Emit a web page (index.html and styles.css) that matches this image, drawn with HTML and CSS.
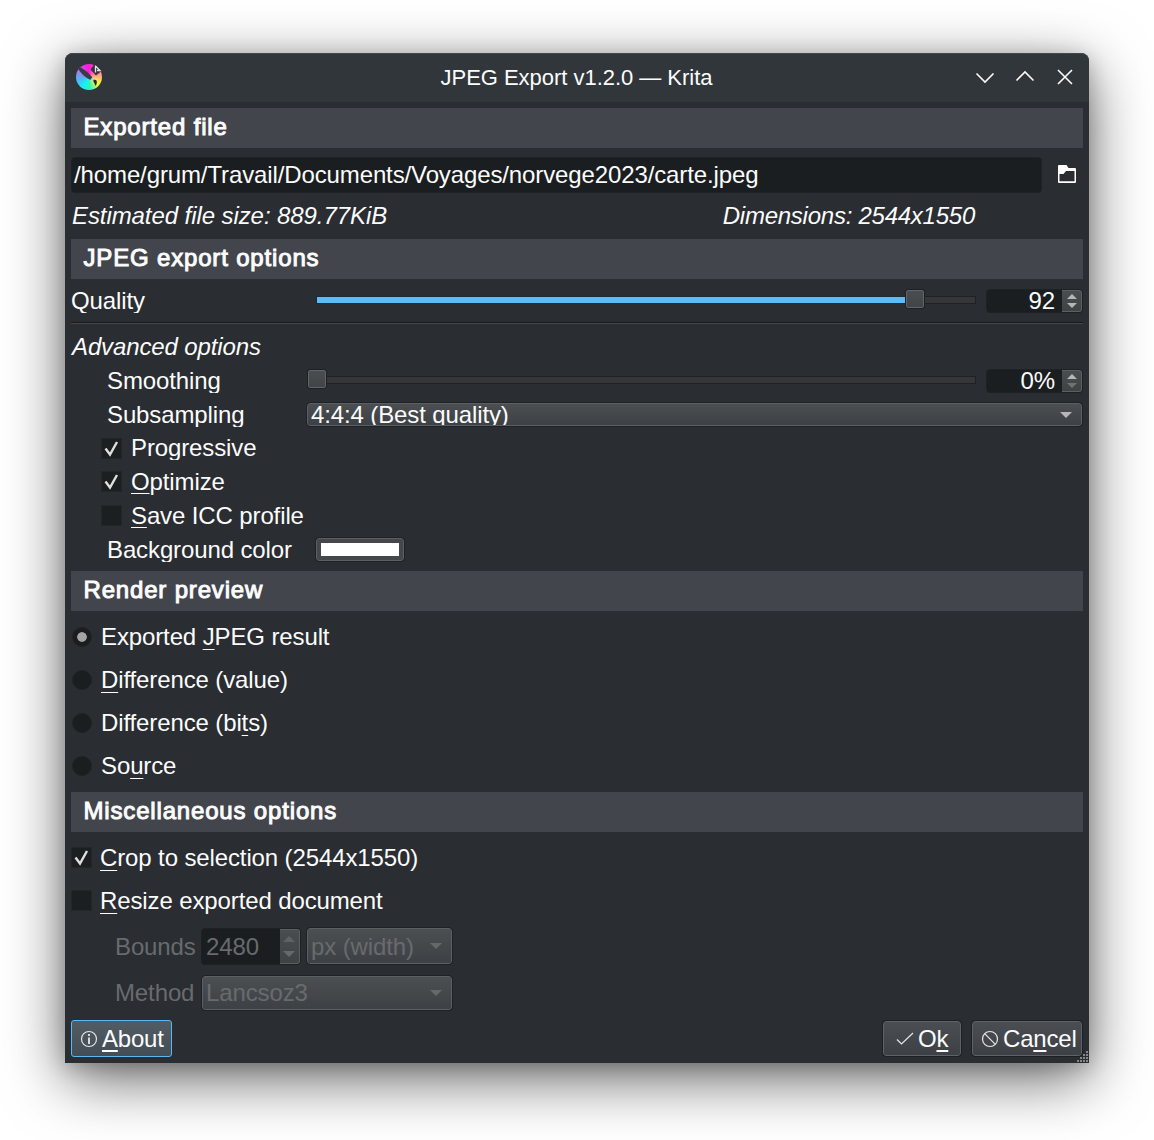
FILE: index.html
```html
<!DOCTYPE html>
<html lang="en">
<head>
<meta charset="utf-8">
<title>JPEG Export v1.2.0 — Krita</title>
<link rel="stylesheet" href="styles.css">
</head>
<body>
<main class="window">
  <header class="titlebar">
    <div class="logo">
      <svg width="30" height="30" viewBox="0 0 30 30">
        <path d="M3 5 7 5.500Q14 9.500 18.500 15.500L16.500 18Q8 14 3 5Z" fill="#3a3b43"/>
        <path d="M16.500 17.500l2.200-2.200 2.500 2-2 2.500z" fill="#b9cfd0"/>
        <path d="M19.500 18c3.500-1.500 4.500 2.500 2 6-.6-3-2.500-3.500-2-6z" fill="#26282b"/>
        <path d="M16.500 7.500l3.500-5 9 5.500-4 3-3 2.500z" fill="#35363d"/>
        <path d="M21.500 3.500v7M21.500 4l4.500 4.500h-3" fill="none" stroke="#e3e5e6" stroke-width="1.300"/>
      </svg>
    </div>
    <h1 class="title">JPEG Export v1.2.0 — Krita</h1>
    <div class="controls">
      <svg width="20" height="20" viewBox="0 0 20 20"><path d="M1.500 6.500 10 15 18.500 6.500"/></svg>
      <svg width="20" height="20" viewBox="0 0 20 20"><path d="M1.500 13.500 10 5 18.500 13.500"/></svg>
      <svg width="20" height="20" viewBox="0 0 20 20"><path d="M3 3 17 17M17 3 3 17"/></svg>
    </div>
  </header>

  <div class="content">
    <h2 class="section">Exported file</h2>
    <div class="file-row">
      <div class="path">/home/grum/Travail/Documents/Voyages/norvege2023/carte.jpeg</div>
      <svg class="folder" width="18" height="18" viewBox="0 0 18 18">
        <path fill="#fff" fill-rule="evenodd" d="M1 0h7.500l2 3H17a1 1 0 0 1 1 1v13a1 1 0 0 1-1 1H1a1 1 0 0 1-1-1V1a1 1 0 0 1 1-1zM1.500 9v7.300h15V6H8L5.500 9z"/>
      </svg>
    </div>
    <div class="info">
      <span>Estimated file size: 889.77KiB</span>
      <span class="dims">Dimensions: 2544x1550</span>
    </div>

    <h2 class="section">JPEG export options</h2>
    <div class="quality">
      <span class="label clip">Quality</span>
      <div class="slider inset"><div class="fill"></div><div class="handle"></div><div class="rest"></div></div>
      <div class="spin"><span class="value">92</span><span class="steps"><i class="up"></i><i class="down"></i></span></div>
    </div>
    <div class="divider"></div>
    <div class="advanced">Advanced options</div>
    <div class="row">
      <span class="label indent clip">Smoothing</span>
      <div class="slider"><div class="handle"></div><div class="rest"></div></div>
      <div class="spin"><span class="value">0%</span><span class="steps"><i class="up"></i><i class="down dim"></i></span></div>
    </div>
    <div class="row">
      <span class="label indent clip">Subsampling</span>
      <div class="combo wide"><span class="combo-text">4:4:4 (Best quality)</span><i class="down"></i></div>
    </div>
    <div class="row check-row first"><span class="box"><svg width="21" height="21" viewBox="0 0 21 21"><path d="M4.500 10.500 9 16.500 16 4"/></svg></span><span class="clip">Progressive</span></div>
    <div class="row check-row"><span class="box"><svg width="21" height="21" viewBox="0 0 21 21"><path d="M4.500 10.500 9 16.500 16 4"/></svg></span><span><u>O</u>ptimize</span></div>
    <div class="row check-row"><span class="box"></span><span><u>S</u>ave ICC profile</span></div>
    <div class="row">
      <span class="label indent clip">Background color</span>
      <div class="swatch"><div class="color"></div></div>
    </div>

    <h2 class="section after-form">Render preview</h2>
    <div class="group">
      <div class="option"><span class="radio on"></span><span>Exported <u>J</u>PEG result</span></div>
      <div class="option"><span class="radio"></span><span><u>D</u>ifference (value)</span></div>
      <div class="option"><span class="radio"></span><span>Difference (bi<u>t</u>s)</span></div>
      <div class="option"><span class="radio"></span><span>So<u>u</u>rce</span></div>
    </div>

    <h2 class="section">Miscellaneous options</h2>
    <div class="group misc">
      <div class="option"><span class="box"><svg width="21" height="21" viewBox="0 0 21 21"><path d="M4.500 10.500 9 16.500 16 4"/></svg></span><span><u>C</u>rop to selection (2544x1550)</span></div>
      <div class="option"><span class="box"></span><span><u>R</u>esize exported document</span></div>
    </div>
    <div class="disabled">
      <span class="field-label">Bounds</span>
      <div class="spin tall"><span class="value">2480</span><span class="steps"><i class="up"></i><i class="down"></i></span></div>
      <div class="combo unit"><span>px (width)</span><i class="down"></i></div>
    </div>
    <div class="disabled method">
      <span class="field-label">Method</span>
      <div class="combo kernel"><span>Lancsoz3</span><i class="down"></i></div>
    </div>

    <footer class="actions">
      <div class="button about">
        <svg width="18" height="18" viewBox="0 0 18 18"><circle cx="9" cy="9" r="7.500"/><path d="M9 7.500V14M9 4v2" stroke-width="1.800"/></svg>
        <span><u>A</u>bout</span>
      </div>
      <div class="button ok">
        <svg width="18" height="18" viewBox="0 0 18 18"><path d="M1 9.500 5.500 14 17 3"/></svg>
        <span>O<u>k</u></span>
      </div>
      <div class="button cancel">
        <svg width="18" height="18" viewBox="0 0 18 18"><circle cx="9" cy="9" r="7.500"/><path d="M3.700 3.700 14.300 14.300"/></svg>
        <span>Ca<u>n</u>cel</span>
      </div>
    </footer>
  </div>
  <svg class="grip" width="12" height="12" viewBox="0 0 12 12">
    <path fill="#858789" d="M9 0h2v2H9zM6 3h2v2H6zM9 3h2v2H9zM3 6h2v2H3zM6 6h2v2H6zM9 6h2v2H9zM0 9h2v2H0zM3 9h2v2H3zM6 9h2v2H6zM9 9h2v2H9z"/>
  </svg>
</main>
</body>
</html>
```

FILE: styles.css
```css
* { box-sizing: border-box; }

body {
  margin: 0;
  padding: 53px 65px 77px;
  height: 1140px;
  overflow: hidden;
  background: #fff;
  color: #fcfcfc;
  font: 24px/34px "Liberation Sans", Arial, sans-serif;
  letter-spacing: -.12px;
  white-space: nowrap;
}

.window {
  position: relative;
  width: 1024px;
  height: 1010px;
  background: #2a2d31;
  border-radius: 8px 8px 0 0;
  box-shadow: 0 16px 60px rgba(0, 0, 0, .6), 0 4px 20px rgba(0, 0, 0, .2);
}

.titlebar {
  display: grid;
  grid-template-columns: 1fr auto 1fr;
  align-items: center;
  height: 49px;
  padding: 0 14px 0 11px;
  background: #31363a;
  border-top: 1px solid #43484d;
  border-radius: 8px 8px 0 0;
}

.logo {
  width: 26px;
  height: 26px;
  margin-bottom: 2px;
  border-radius: 50%;
  background: conic-gradient(#fd1fd5, #ff8a94 70deg, #ffd75a 105deg, #e8ff3c 130deg, #35f0c0 175deg, #12f4f4 210deg, #4cb8f5 255deg, #9a83ee 295deg, #f61fe8 345deg, #fd1fd5);
}
.logo svg { display: block; margin: -2px; }

.title { margin: 0 0 0 2px; font-size: 22px; font-weight: 400; letter-spacing: -.03px; }

.controls { display: flex; justify-content: flex-end; gap: 20px; margin-bottom: 2px; }
.controls svg { fill: none; stroke: #fcfcfc; stroke-width: 1.6; }

.content { padding: 6px 6px 0; }

.section {
  margin: 0;
  height: 40px;
  padding-left: 12.5px;
  background: #42454c;
  font-size: 24px;
  line-height: 38px;
  font-weight: 400;
  letter-spacing: .83px;
  -webkit-text-stroke: 1px #fcfcfc;
}
.after-form { margin-top: 4px; }

.file-row {
  display: flex;
  align-items: center;
  justify-content: space-between;
  height: 36px;
  margin-top: 9px;
  padding-right: 7px;
}
.folder { margin-bottom: 2px; }
.path {
  width: 971px;
  height: 36px;
  padding-left: 2px;
  border: 1px solid #1f2225;
  border-radius: 4px;
  background: #1b1e20;
}

.info { display: flex; height: 46px; line-height: 46px; padding-left: 1px; font-style: italic; letter-spacing: -.08px; }
.dims { margin-left: auto; margin-right: 108px; letter-spacing: -.25px; }

.clip { height: 24px; line-height: 24px; overflow: hidden; }

.quality, .row { display: flex; align-items: center; }
.quality { height: 43px; }
.row { height: 34px; }
.label { width: 236px; }
.indent { padding-left: 36px; }

.divider { height: 2px; background: #44484c; border-top: 1px solid #18191b; }
.advanced { height: 40px; line-height: 46px; padding-left: 1px; font-style: italic; }

.slider { display: flex; align-items: center; width: 669px; height: 20px; margin-top: -2px; }
.slider.inset { padding-left: 9px; }
.fill { width: 589px; height: 8px; background: #5bbcf6; border: solid #1b2a34; border-width: 1px 0 1px 1px; }
.rest { flex: 1; height: 8px; background: #34373a; border: 1px solid #1f2123; border-left: 0; }
.handle {
  width: 20px;
  height: 20px;
  margin-top: -2px;
  border: 1px solid #1d2022;
  border-radius: 3px;
  background: linear-gradient(#4a4e52, #404447);
  box-shadow: inset 0 0 0 1px #62666a;
}

.spin {
  display: flex;
  width: 97px;
  height: 24px;
  margin-left: auto;
  border: 1px solid #1e2123;
  border-radius: 4px;
  background: #1b1e20;
  line-height: 22px;
}
.value { flex: 1; text-align: right; padding-right: 7px; }
.steps {
  display: flex;
  flex-direction: column;
  align-items: center;
  justify-content: center;
  gap: 4px;
  width: 20px;
  background: linear-gradient(#494d51, #3f4346);
  border: 1px solid #5c6063;
  border-left: 0;
  border-radius: 0 3px 3px 0;
}
.up { border: solid transparent; border-width: 0 5px 5px; border-bottom-color: #b4b6b7; }
.down { border: solid transparent; border-width: 5px 5px 0; border-top-color: #b4b6b7; }
.down.dim { border-top-color: #707376; }

.combo {
  display: flex;
  align-items: center;
  justify-content: space-between;
  border: 1px solid #5c6064;
  border-radius: 3px;
  outline: 1px solid #1f2225;
  background: linear-gradient(#4b4f52, #3d4145);
  padding: 0 9px 0 3px;
}
.combo .down { border-width: 6px 6px 0; }
.combo.wide { width: 775px; height: 23px; margin-bottom: 1px; }
.combo-text { height: 21px; line-height: 22px; overflow: hidden; }

.check-row { padding-left: 30px; gap: 9px; }
.check-row.first { height: 33px; }
.check-row .clip { margin-bottom: 1px; }
.check-row .box { margin-bottom: 1px; }

.box {
  width: 21px;
  height: 21px;
  background: #1c1f21;
  border: 1px solid #232629;
}
.box svg { display: block; margin: -1px; fill: none; stroke: #dedfdf; stroke-width: 2.4; }

u {
  text-decoration: underline;
  text-decoration-thickness: 1px;
  text-underline-offset: 3px;
  text-decoration-skip-ink: none;
}
.option u { text-underline-offset: 4px; }

.swatch {
  width: 88px;
  height: 23px;
  margin: 0 0 1px 9px;
  padding: 4px;
  border: 1px solid #5c6064;
  border-radius: 3px;
  outline: 1px solid #1f2225;
  background: #44484b;
}
.color { height: 13px; background: #fff; }

.group { padding: 4px 0 5px; }
.group.misc { padding-bottom: 6px; }
.option { display: flex; align-items: center; height: 43px; padding-left: 1px; gap: 9px; }
.misc .option { padding-left: 0; gap: 8px; }
.radio { width: 20px; height: 20px; border-radius: 50%; background: #1b1e20; border: 1px solid #202326; }
.radio.on { background: radial-gradient(circle, #a2a4a5 4.400px, #1b1e20 5.200px); }

.disabled { display: flex; height: 37px; color: #686b6e; }
.disabled span { line-height: 37px; }
.field-label { width: 130px; padding-left: 44px; }
.disabled .spin { width: 100px; height: 37px; margin: 0; }
.disabled .value { text-align: left; padding-left: 4px; line-height: 36px; }
.disabled .up { border-bottom-color: #5e6265; }
.disabled .down { border-top-color: #66696c; }
.disabled .steps { gap: 9px; padding-right: 1px; }
.disabled .steps i { border-left-width: 6px; border-right-width: 6px; }
.disabled .steps .up { border-bottom-width: 6px; }
.disabled .steps .down { border-top-width: 6px; }
.unit { width: 145px; height: 36px; margin-left: 6px; }
.method { height: 34px; margin-top: 11px; }
.method span { line-height: 34px; }
.kernel { width: 250px; height: 34px; margin-left: 1px; }

.actions { display: flex; margin-top: 10px; height: 37px; }
.button {
  display: flex;
  align-items: center;
  height: 35px;
  margin-top: 1px;
  border: 1px solid #5f6367;
  border-radius: 3px;
  outline: 1px solid #1d2022;
  background: linear-gradient(#4a4e52, #3d4145);
  gap: 4px;
  letter-spacing: -.2px;
}
.button u { text-decoration-thickness: 2px; }
.button svg { fill: none; stroke: #e6e7e8; stroke-width: 1.2; }
.about {
  width: 101px;
  height: 37px;
  margin: 0;
  padding-left: 8px;
  border-color: #5cb8ef;
  outline: 0;
  background: linear-gradient(#515c65, #434d55);
}
.ok { width: 78px; margin-left: auto; padding-left: 12px; }
.cancel { width: 110px; margin: 1px 1px 0 11px; padding-left: 8px; }

.grip { position: absolute; right: 0; bottom: 0; }
```
